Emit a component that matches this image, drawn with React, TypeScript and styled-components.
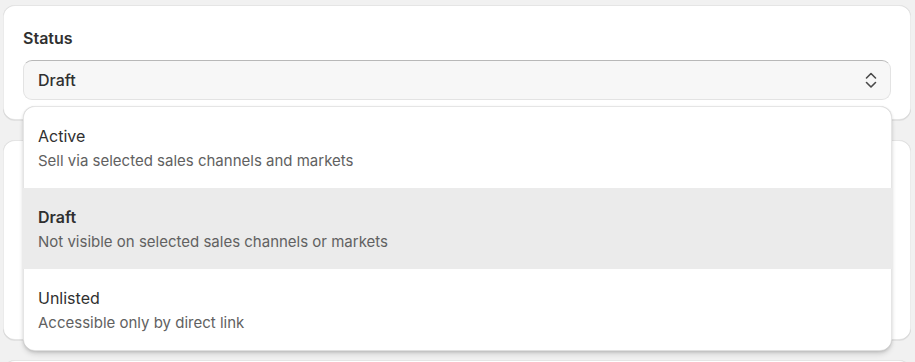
import React, { useState } from "react";
import styled, { createGlobalStyle } from "styled-components";

const GlobalStyle = createGlobalStyle`
  html, body {
    margin: 0;
    padding: 0;
    background: #f1f1f1;
    font-family: Inter, "Noto Sans", "Liberation Sans", sans-serif;
    color: #303030;
    -webkit-font-smoothing: antialiased;
  }
`;

const Page = styled.div`
  display: flex;
  flex-direction: column;
  gap: 20px;
  padding: 5px 4px 0 3px;
  height: 362px;
  box-sizing: border-box;
  overflow: hidden;
`;

const Card = styled.div<{ $h?: number }>`
  background: #ffffff;
  border-radius: 12px;
  box-shadow: 0 1px 0 0 rgba(26, 26, 26, 0.07),
    inset 0 1px 0 0 rgba(204, 204, 204, 0.5),
    inset 0 -1px 0 0 rgba(0, 0, 0, 0.1), inset -1px 0 0 0 rgba(0, 0, 0, 0.08),
    inset 1px 0 0 0 rgba(0, 0, 0, 0.08);
  padding: 23px 20px 20px;
  box-sizing: border-box;
  flex-shrink: 0;
  height: ${(p) => (p.$h ? `${p.$h}px` : "auto")};
`;

const Label = styled.div`
  font-size: 16px;
  line-height: 20px;
  font-weight: 600;
  color: #303030;
  margin-bottom: 12px;
`;

const SelectWrap = styled.div`
  position: relative;
`;

const SelectBox = styled.div`
  height: 40px;
  box-sizing: border-box;
  display: flex;
  align-items: center;
  justify-content: space-between;
  padding: 0 13px 0 14px;
  background: #f7f7f7;
  border: 1px solid #e3e3e3;
  border-top-color: #b8b8b8;
  border-radius: 9px;
  font-size: 16px;
  font-weight: 500;
  color: #303030;
  cursor: pointer;
`;

const Popover = styled.div`
  position: absolute;
  top: calc(100% + 6px);
  left: 0;
  right: -1px;
  padding: 1px 0;
  background: #ffffff;
  border-radius: 12px;
  overflow: hidden;
  box-shadow: 0 4px 6px -2px rgba(26, 26, 26, 0.2),
    0 1px 3px 0 rgba(26, 26, 26, 0.12),
    inset 0 1px 0 0 rgba(204, 204, 204, 0.5),
    inset 0 -1px 0 0 rgba(0, 0, 0, 0.12), inset -1px 0 0 0 rgba(0, 0, 0, 0.1),
    inset 1px 0 0 0 rgba(0, 0, 0, 0.1);
  z-index: 10;
`;

const Option = styled.div<{ $selected?: boolean }>`
  display: flex;
  flex-direction: column;
  gap: 5px;
  padding: 19px 15px 17px;
  height: 81px;
  box-sizing: border-box;
  background: ${(p) => (p.$selected ? "#ebebeb" : "transparent")};
  cursor: pointer;
`;

const OptionTitle = styled.div<{ $selected?: boolean }>`
  font-size: 16px;
  line-height: 20px;
  font-weight: ${(p) => (p.$selected ? 600 : 400)};
  color: #303030;
`;

const OptionDesc = styled.div`
  font-size: 15px;
  line-height: 20px;
  color: #616161;
`;

const options = [
  { title: "Active", desc: "Sell via selected sales channels and markets" },
  { title: "Draft", desc: "Not visible on selected sales channels or markets" },
  { title: "Unlisted", desc: "Accessible only by direct link" },
];

function SelectIcon() {
  return (
    <svg width="12" height="20" viewBox="0 0 12 20" fill="none">
      <path
        d="M1.5 8 L6 3.5 L10.5 8"
        stroke="#4a4a4a"
        strokeWidth="1.6"
        strokeLinecap="round"
        strokeLinejoin="round"
      />
      <path
        d="M1.5 12.5 L6 17 L10.5 12.5"
        stroke="#4a4a4a"
        strokeWidth="1.6"
        strokeLinecap="round"
        strokeLinejoin="round"
      />
    </svg>
  );
}

export default function App() {
  const [value, setValue] = useState("Draft");

  return (
    <>
      <GlobalStyle />
      <Page>
        <Card>
          <Label>Status</Label>
          <SelectWrap>
            <SelectBox>
              <span>{value}</span>
              <SelectIcon />
            </SelectBox>
            <Popover>
              {options.map((o) => (
                <Option
                  key={o.title}
                  $selected={o.title === value}
                  onClick={() => setValue(o.title)}
                >
                  <OptionTitle $selected={o.title === value}>{o.title}</OptionTitle>
                  <OptionDesc>{o.desc}</OptionDesc>
                </Option>
              ))}
            </Popover>
          </SelectWrap>
        </Card>
        <Card $h={200} />
        <Card $h={120} />
      </Page>
    </>
  );
}
